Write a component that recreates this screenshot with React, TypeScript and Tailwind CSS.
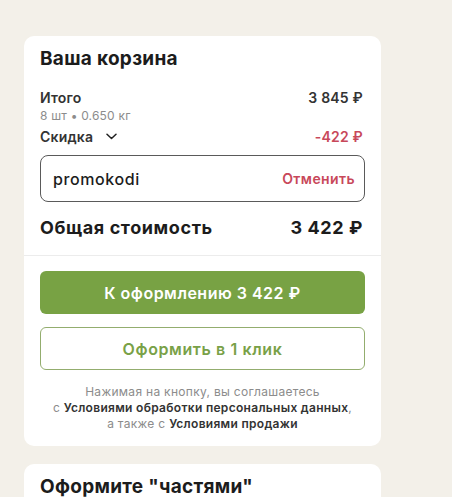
import React from "react";

const font = { fontFamily: "Inter, 'Noto Sans', sans-serif" };

export default function App() {
  return (
    <div className="h-[497px] w-[452px] overflow-hidden bg-[#f3f0e9] pl-[24px] pt-[36px] text-[#1c1c1c]" style={font}>
      <div className="w-[357px] rounded-[10px] bg-white pb-[14px]">
        <div className="px-4">
          <div className="pt-[11px] text-[19px] font-bold leading-[24px] tracking-[0.3px]">Ваша корзина</div>
          <div className="mt-[16px] flex h-[20px] items-center justify-between pr-[2px] text-[14px] font-semibold tracking-[0.2px] text-[#333]">
            <span>Итого</span>
            <span>3 845 ₽</span>
          </div>
          <div className="mt-[1px] h-[16px] text-[12px] leading-[16px] tracking-[0.2px] text-[#8c8c8c]">8 шт • 0.650 кг</div>
          <div className="mt-[2px] flex h-[20px] items-center justify-between pr-[2px] text-[14px] font-semibold tracking-[0.2px]">
            <span className="flex items-center text-[#333]">
              Скидка
              <svg className="ml-[13px]" width="11" height="7" viewBox="0 0 11 7" fill="none">
                <path d="M1 1.2L5.5 5.5L10 1.2" stroke="#222" strokeWidth="1.5" strokeLinecap="round" strokeLinejoin="round" />
              </svg>
            </span>
            <span className="text-[#c8485a]">-422 ₽</span>
          </div>
          <div className="mt-[9px] flex h-[47px] items-center justify-between rounded-[8px] border border-[#5a5a5a] pl-[12px] pr-[9px]">
            <span className="text-[16px] font-medium tracking-[0.6px] text-[#1c1c1c]">promokodi</span>
            <span className="text-[14px] font-semibold tracking-[0.4px] text-[#c8485a]">Отменить</span>
          </div>
          <div className="mt-[13px] flex h-[24px] items-center justify-between pr-[2px] text-[18px] font-bold tracking-[0.6px]">
            <span>Общая стоимость</span>
            <span>3 422 ₽</span>
          </div>
        </div>
        <div className="mt-[16px] border-t border-[#ececec]" />
        <div className="px-4">
          <button className="mt-[15px] flex h-[43px] w-full items-center justify-center rounded-[6px] bg-[#78a244] text-[16px] font-semibold tracking-[0.5px] text-white">
            К оформлению 3 422 ₽
          </button>
          <button className="mt-[13px] flex h-[43px] w-full items-center justify-center rounded-[6px] border border-[#93ad6e] bg-white text-[16px] font-semibold tracking-[0.6px] text-[#79a147]">
            Оформить в 1 клик
          </button>
          <div className="mt-[14px] text-center text-[12px] leading-[16px] tracking-[0.3px] text-[#8c8c8c]">
            Нажимая на кнопку, вы соглашаетесь
            <br />
            с <span className="font-semibold text-[#333]">Условиями обработки персональных данных</span>,
            <br />
            а также с <span className="font-semibold text-[#333]">Условиями продажи</span>
          </div>
        </div>
      </div>
      <div className="mt-[18px] h-[60px] w-[357px] rounded-t-[10px] bg-white px-4 pt-[11px] text-[19px] font-bold leading-[24px] tracking-[0.3px]">
        Оформите "частями"
      </div>
    </div>
  );
}
